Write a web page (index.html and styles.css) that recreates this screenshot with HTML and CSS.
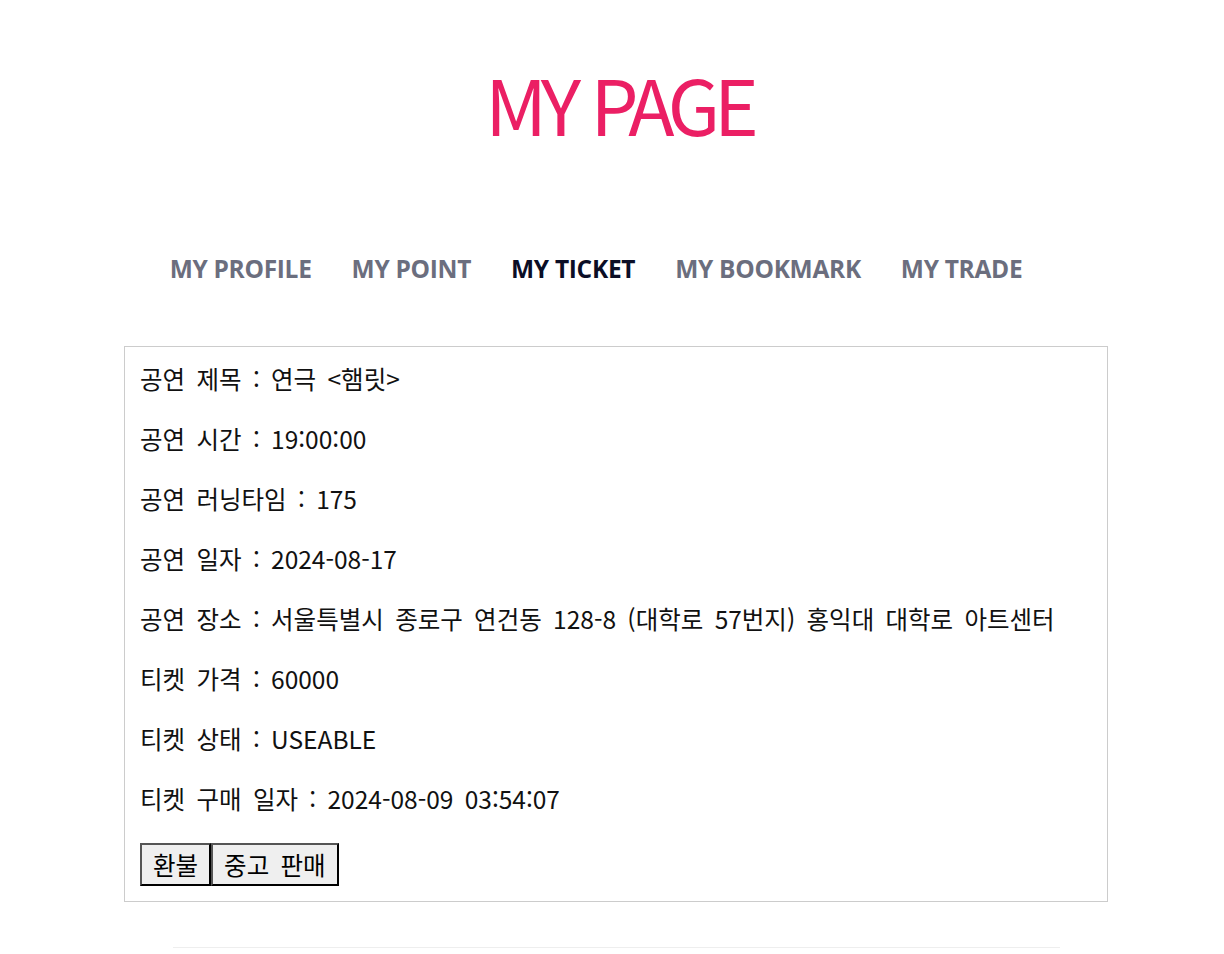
FILE: index.html
```html
<!DOCTYPE html>
<html lang="ko">
<head>
<meta charset="utf-8">
<title>MY PAGE</title>
<link rel="stylesheet" href="styles.css">
</head>
<body>
<div class="page">
  <h1 class="title">MY PAGE</h1>
  <nav class="tabs">
    <a class="tab">MY PROFILE</a>
    <a class="tab">MY POINT</a>
    <a class="tab active">MY TICKET</a>
    <a class="tab">MY BOOKMARK</a>
    <a class="tab">MY TRADE</a>
  </nav>
  <div class="ticket">
    <p class="row">공연 제목 : 연극 &lt;햄릿&gt;</p>
    <p class="row">공연 시간 : 19:00:00</p>
    <p class="row">공연 러닝타임 : 175</p>
    <p class="row">공연 일자 : 2024-08-17</p>
    <p class="row">공연 장소 : 서울특별시 종로구 연건동 128-8 (대학로 57번지) 홍익대 대학로 아트센터</p>
    <p class="row">티켓 가격 : 60000</p>
    <p class="row">티켓 상태 : USEABLE</p>
    <p class="row">티켓 구매 일자 : 2024-08-09 03:54:07</p>
    <div class="actions"><button class="btn">환불</button><button class="btn">중고 판매</button></div>
  </div>
  <hr class="divider">
</div>
</body>
</html>
```

FILE: styles.css
```css
html, body {
  margin: 0;
  padding: 0;
  background: #fff;
}
body {
  padding-left: 8px;
  font-family: "Open Sans", "Noto Sans CJK KR", sans-serif;
  color: #111;
}
.page {
  width: 1216px;
  display: flex;
  flex-direction: column;
  align-items: center;
}
.title {
  margin: 53px 0 0;
  font-family: "Noto Sans CJK KR", sans-serif;
  font-weight: 400;
  font-size: 76px;
  line-height: 100px;
  letter-spacing: -6px;
  text-indent: 6px;
  color: #eb1f64;
}
.tabs {
  margin-top: 101px;
  display: flex;
  gap: 40px;
  padding-right: 40px;
}
.tab {
  font-family: "Open Sans", "Noto Sans CJK KR", sans-serif;
  font-weight: 700;
  font-size: 24.5px;
  line-height: 30px;
  color: #6b6e7e;
  letter-spacing: -0.3px;
}
.tab.active {
  color: #0b0e26;
}
.ticket {
  margin-top: 62px;
  width: 984px;
  box-sizing: border-box;
  border: 1px solid #cccccc;
  padding: 17px 15px 15px;
}
.row {
  margin: 0 0 30px;
  font-size: 24.5px;
  line-height: 30px;
  font-family: "Noto Sans CJK KR", sans-serif;
  word-spacing: 4.5px;
}
.row:last-of-type {
  margin-bottom: 29px;
}
.actions {
  display: flex;
}
.btn {
  height: 43px;
  padding: 0 11px;
  font-family: "Noto Sans CJK KR", sans-serif;
  font-size: 24.5px;
  line-height: 30px;
  word-spacing: 4.5px;
  color: #000;
  background: #efefef;
  border: 2px solid;
  border-color: #555 #000 #000 #555;
  margin: 0;
}
.divider {
  width: 887px;
  margin: 45px 0 0;
  border: 0;
  height: 1px;
  background: #eeeeee;
}
```
